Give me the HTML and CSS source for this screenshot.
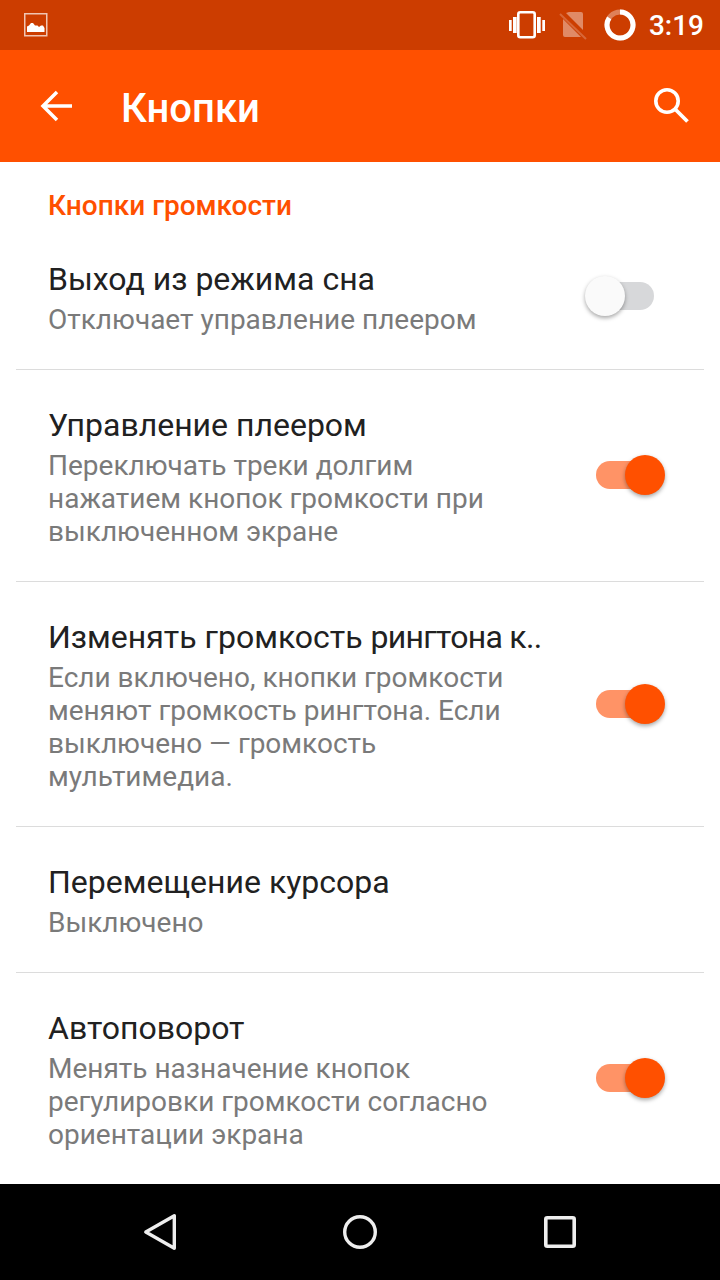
FILE: index.html
```html
<!DOCTYPE html>
<html lang="ru">
<head>
  <meta charset="UTF-8">
  <meta name="viewport" content="width=device-width, initial-scale=1.0">
  <title>Кнопки</title>
  <link rel="stylesheet" href="styles.css">
</head>
<body>
  <div class="screen">

    <div class="status-bar">
      <svg class="status-picture" width="26" height="26" viewBox="0 0 26 26">
        <rect x="1.75" y="1.75" width="22" height="22" fill="none" stroke="#fff" stroke-opacity="0.7" stroke-width="1.5"/>
        <path d="M4 20 V14.5 L6 13.5 L8 11 L10 11 L12 13.5 L14.5 13.5 L16 15 L18 13.5 L20 13.5 L21.5 16 V20 Z" fill="#fff"/>
      </svg>
      <div class="status-right">
        <svg class="status-vibrate" width="36" height="28" viewBox="0 0 36 28">
          <rect x="9.3" y="1.3" width="16.4" height="25" rx="2" fill="none" stroke="#fff" stroke-width="2.6"/>
          <path d="M4 6 H7.7 V22 H4 Z M0 9 H2.7 V20 H0 Z M28 6 H31.7 V22 H28 Z M33.3 9 H36 V20 H33.3 Z" fill="#fff"/>
        </svg>
        <svg class="status-sim" width="28" height="30" viewBox="0 0 28 30">
          <path d="M10 2 H22 Q24 2 24 4 V20 L7 3 Z M4 9 L22 27 H6 Q4 27 4 25 Z" fill="#fff" fill-opacity="0.4"/>
          <path d="M1 4 L27 29" stroke="#fff" stroke-opacity="0.22" stroke-width="2"/>
        </svg>
        <svg class="status-battery" width="32" height="32" viewBox="0 0 32 32">
          <circle cx="16" cy="16" r="13" fill="none" stroke="#fff" stroke-opacity="0.35" stroke-width="5"/>
          <path d="M16 3 A13 13 0 1 1 5.2 8.8" fill="none" stroke="#fff" stroke-width="5"/>
        </svg>
        <span class="status-time">3:19</span>
      </div>
    </div>

    <div class="app-bar">
      <svg class="back-icon" width="34" height="32" viewBox="0 0 34 32">
        <path d="M32 16 H3 M17 2 L3 16 L17 30" fill="none" stroke="#fff" stroke-width="3.5"/>
      </svg>
      <h1 class="app-title">Кнопки</h1>
      <svg class="search-icon" width="36" height="36" viewBox="0 0 36 36">
        <circle cx="14" cy="13" r="11.2" fill="none" stroke="#fff" stroke-width="3.6"/>
        <path d="M22 21 L34.5 33.5" stroke="#fff" stroke-width="3.8"/>
      </svg>
    </div>

    <div class="settings">
      <div class="section-title">Кнопки громкости</div>

      <div class="row">
        <div class="row-text">
          <div class="row-title">Выход из режима сна</div>
          <div class="row-summary">Отключает управление плеером</div>
        </div>
        <div class="switch"><span class="track"></span><span class="thumb"></span></div>
      </div>

      <div class="row">
        <div class="row-text">
          <div class="row-title">Управление плеером</div>
          <div class="row-summary">Переключать треки долгим<br>нажатием кнопок громкости при<br>выключенном экране</div>
        </div>
        <div class="switch on"><span class="track"></span><span class="thumb"></span></div>
      </div>

      <div class="row">
        <div class="row-text">
          <div class="row-title">Изменять громкость <span class="title-tail">рингтона к..</span></div>
          <div class="row-summary">Если включено, кнопки громкости<br>меняют громкость рингтона. Если<br>выключено — громкость<br>мультимедиа.</div>
        </div>
        <div class="switch on"><span class="track"></span><span class="thumb"></span></div>
      </div>

      <div class="row">
        <div class="row-text">
          <div class="row-title">Перемещение курсора</div>
          <div class="row-summary">Выключено</div>
        </div>
      </div>

      <div class="row">
        <div class="row-text">
          <div class="row-title">Автоповорот</div>
          <div class="row-summary">Менять назначение кнопок<br>регулировки громкости согласно<br>ориентации экрана</div>
        </div>
        <div class="switch on"><span class="track"></span><span class="thumb"></span></div>
      </div>
    </div>

    <div class="nav-bar">
      <svg width="34" height="38" viewBox="0 0 34 38">
        <path d="M2.8 19 L31.3 2.7 V35.3 Z" fill="none" stroke="#eee" stroke-width="3.4" stroke-linejoin="round"/>
      </svg>
      <svg class="nav-home" width="34" height="34" viewBox="0 0 34 34">
        <circle cx="17" cy="17" r="15.3" fill="none" stroke="#eee" stroke-width="3.4"/>
      </svg>
      <svg width="32" height="32" viewBox="0 0 32 32">
        <rect x="1.8" y="1.8" width="28.4" height="28.4" rx="1.5" fill="none" stroke="#eee" stroke-width="3.6"/>
      </svg>
    </div>

  </div>
</body>
</html>
```

FILE: styles.css
```css
* {
  box-sizing: border-box;
}

body {
  margin: 0;
  font-family: Roboto, sans-serif;
  background-color: #fff;
}

.screen {
  width: 720px;
  height: 1280px;
  display: flex;
  flex-direction: column;
  overflow: hidden;
}

.status-bar {
  height: 50px;
  flex: none;
  background-color: #cc3d00;
  color: #fff;
  display: flex;
  align-items: center;
  justify-content: space-between;
  padding: 0 16px 0 23px;
}

.status-right {
  display: flex;
  align-items: center;
}

.status-vibrate {
  margin-right: 14px;
}

.status-sim {
  margin-right: 17px;
}

.status-battery {
  margin-right: 13px;
}

.status-time {
  font-size: 28px;
  font-weight: 500;
}

.app-bar {
  height: 112px;
  flex: none;
  background-color: #ff5000;
  color: #fff;
  display: flex;
  align-items: center;
  padding: 0 31px 0 40px;
}

.app-title {
  flex: 1;
  margin: 4px 0 0 47px;
  font-size: 40px;
  font-weight: 500;
}

.settings {
  flex: 1;
  min-height: 0;
  padding: 0 16px;
}

.section-title {
  height: 62px;
  padding: 28px 0 0 32px;
  font-size: 28px;
  line-height: 32px;
  font-weight: 500;
  color: #ff5000;
}

.row {
  display: flex;
  align-items: center;
  justify-content: space-between;
  padding: 0 39px 0 32px;
  border-bottom: 1px solid #dcdcdc;
}

.row:last-child {
  border-bottom-color: transparent;
}

.row-text {
  padding: 39px 0 33px;
}

.row-title {
  font-size: 32px;
  line-height: 33px;
  color: #212121;
}

.title-tail {
  letter-spacing: -0.7px;
}

.row-summary {
  font-size: 28px;
  line-height: 33px;
  color: #7a7a7a;
  margin-top: 7px;
}

.switch {
  position: relative;
  width: 80px;
  height: 40px;
  margin-bottom: 1px;
  flex: none;
}

.track {
  position: absolute;
  left: 11px;
  top: 6px;
  width: 58px;
  height: 28px;
  border-radius: 14px;
  background-color: #d7d8da;
}

.thumb {
  position: absolute;
  left: 0;
  top: 0;
  width: 40px;
  height: 40px;
  border-radius: 50%;
  background-color: #fafafa;
  box-shadow: 0 2px 4px rgba(0, 0, 0, 0.35);
}

.switch.on .track {
  background-color: #ff9366;
}

.switch.on .thumb {
  left: 40px;
  background-color: #ff5000;
}

.nav-bar {
  height: 96px;
  flex: none;
  background-color: #000;
  display: flex;
  align-items: center;
  justify-content: space-between;
  padding: 0 144px 0 143px;
}

.nav-home {
  margin-right: 1px;
}
```
